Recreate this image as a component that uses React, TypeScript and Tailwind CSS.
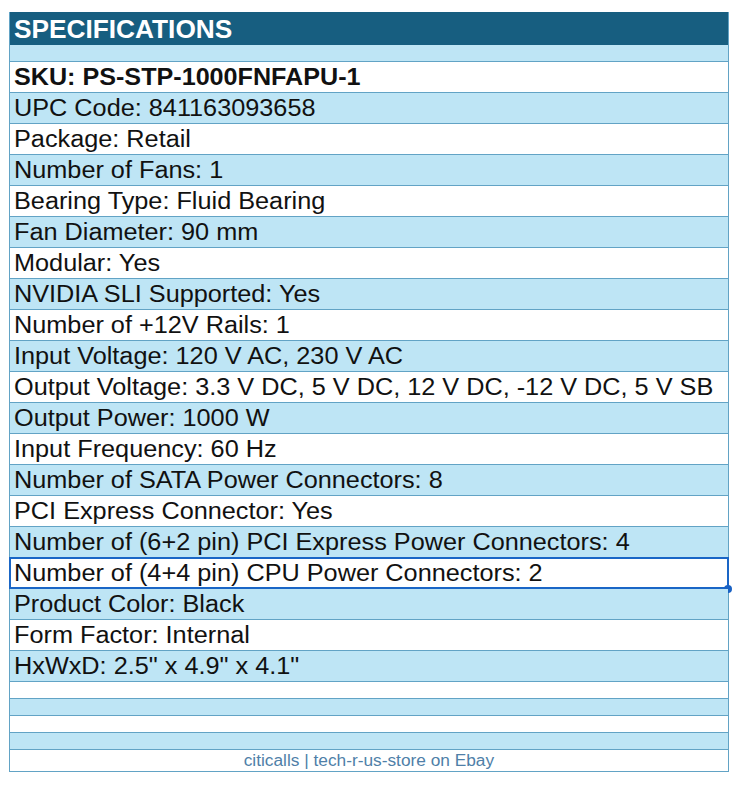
import React from "react";

const rows: { t: string; bold?: boolean; sel?: boolean }[] = [
  { t: "SKU: PS-STP-1000FNFAPU-1", bold: true },
  { t: "UPC Code: 841163093658" },
  { t: "Package: Retail" },
  { t: "Number of Fans: 1" },
  { t: "Bearing Type: Fluid Bearing" },
  { t: "Fan Diameter: 90 mm" },
  { t: "Modular: Yes" },
  { t: "NVIDIA SLI Supported: Yes" },
  { t: "Number of +12V Rails: 1" },
  { t: "Input Voltage: 120 V AC, 230 V AC" },
  { t: "Output Voltage: 3.3 V DC, 5 V DC, 12 V DC, -12 V DC, 5 V SB" },
  { t: "Output Power: 1000 W" },
  { t: "Input Frequency: 60 Hz" },
  { t: "Number of SATA Power Connectors: 8" },
  { t: "PCI Express Connector: Yes" },
  { t: "Number of (6+2 pin) PCI Express Power Connectors: 4" },
  { t: "Number of (4+4 pin) CPU Power Connectors: 2", sel: true },
  { t: "Product Color: Black" },
  { t: "Form Factor: Internal" },
  { t: 'HxWxD: 2.5" x 4.9" x 4.1"' },
];

export default function App() {
  return (
    <div
      className="w-[740px] h-[800px] bg-white pt-[12px] pl-[9px]"
      style={{ fontFamily: '"Liberation Sans", Arial, sans-serif' }}
    >
      <div className="w-[720px] border-x border-b border-[#62a3c5]">
        <div className="h-[33px] bg-[#175e80] pl-[4px] text-white font-bold text-[25px] leading-[34px] whitespace-nowrap">
          <span className="inline-block origin-left scale-x-[1.05]">SPECIFICATIONS</span>
        </div>
        <div className="h-[17px] bg-[#bee5f5] border-b border-[#62a3c5]" />
        {rows.map((r, i) => (
          <div
            key={i}
            className={
              "relative h-[31px] border-b border-[#62a3c5] pl-[4px] text-[23.5px] leading-[31px] text-[#111] whitespace-nowrap " +
              (i % 2 === 1 ? "bg-[#bee5f5]" : "bg-white") +
              (r.bold ? " font-bold" : "")
            }
          >
            <span className={"inline-block origin-left " + (r.bold ? "scale-x-[1.07]" : "scale-x-[1.075]")}>{r.t}</span>
            {r.sel && (
              <>
                <div className="absolute left-[-1px] right-[-1px] top-[-1px] bottom-[-1px] border-2 border-[#1a66c6]" />
                <div className="absolute right-[-4px] bottom-[-5px] w-[8px] h-[8px] rounded-full bg-[#1a62c4]" />
              </>
            )}
          </div>
        ))}
        <div className="h-[17px] bg-white border-b border-[#62a3c5]" />
        <div className="h-[17px] bg-[#bee5f5] border-b border-[#62a3c5]" />
        <div className="h-[17px] bg-white border-b border-[#62a3c5]" />
        <div className="h-[17px] bg-[#bee5f5] border-b border-[#62a3c5]" />
        <div className="h-[21px] bg-white text-center text-[16px] leading-[22px] text-[#4f7fa8] whitespace-nowrap">
          <span className="inline-block origin-center scale-x-[1.08]">citicalls | tech-r-us-store on Ebay</span>
        </div>
      </div>
    </div>
  );
}
